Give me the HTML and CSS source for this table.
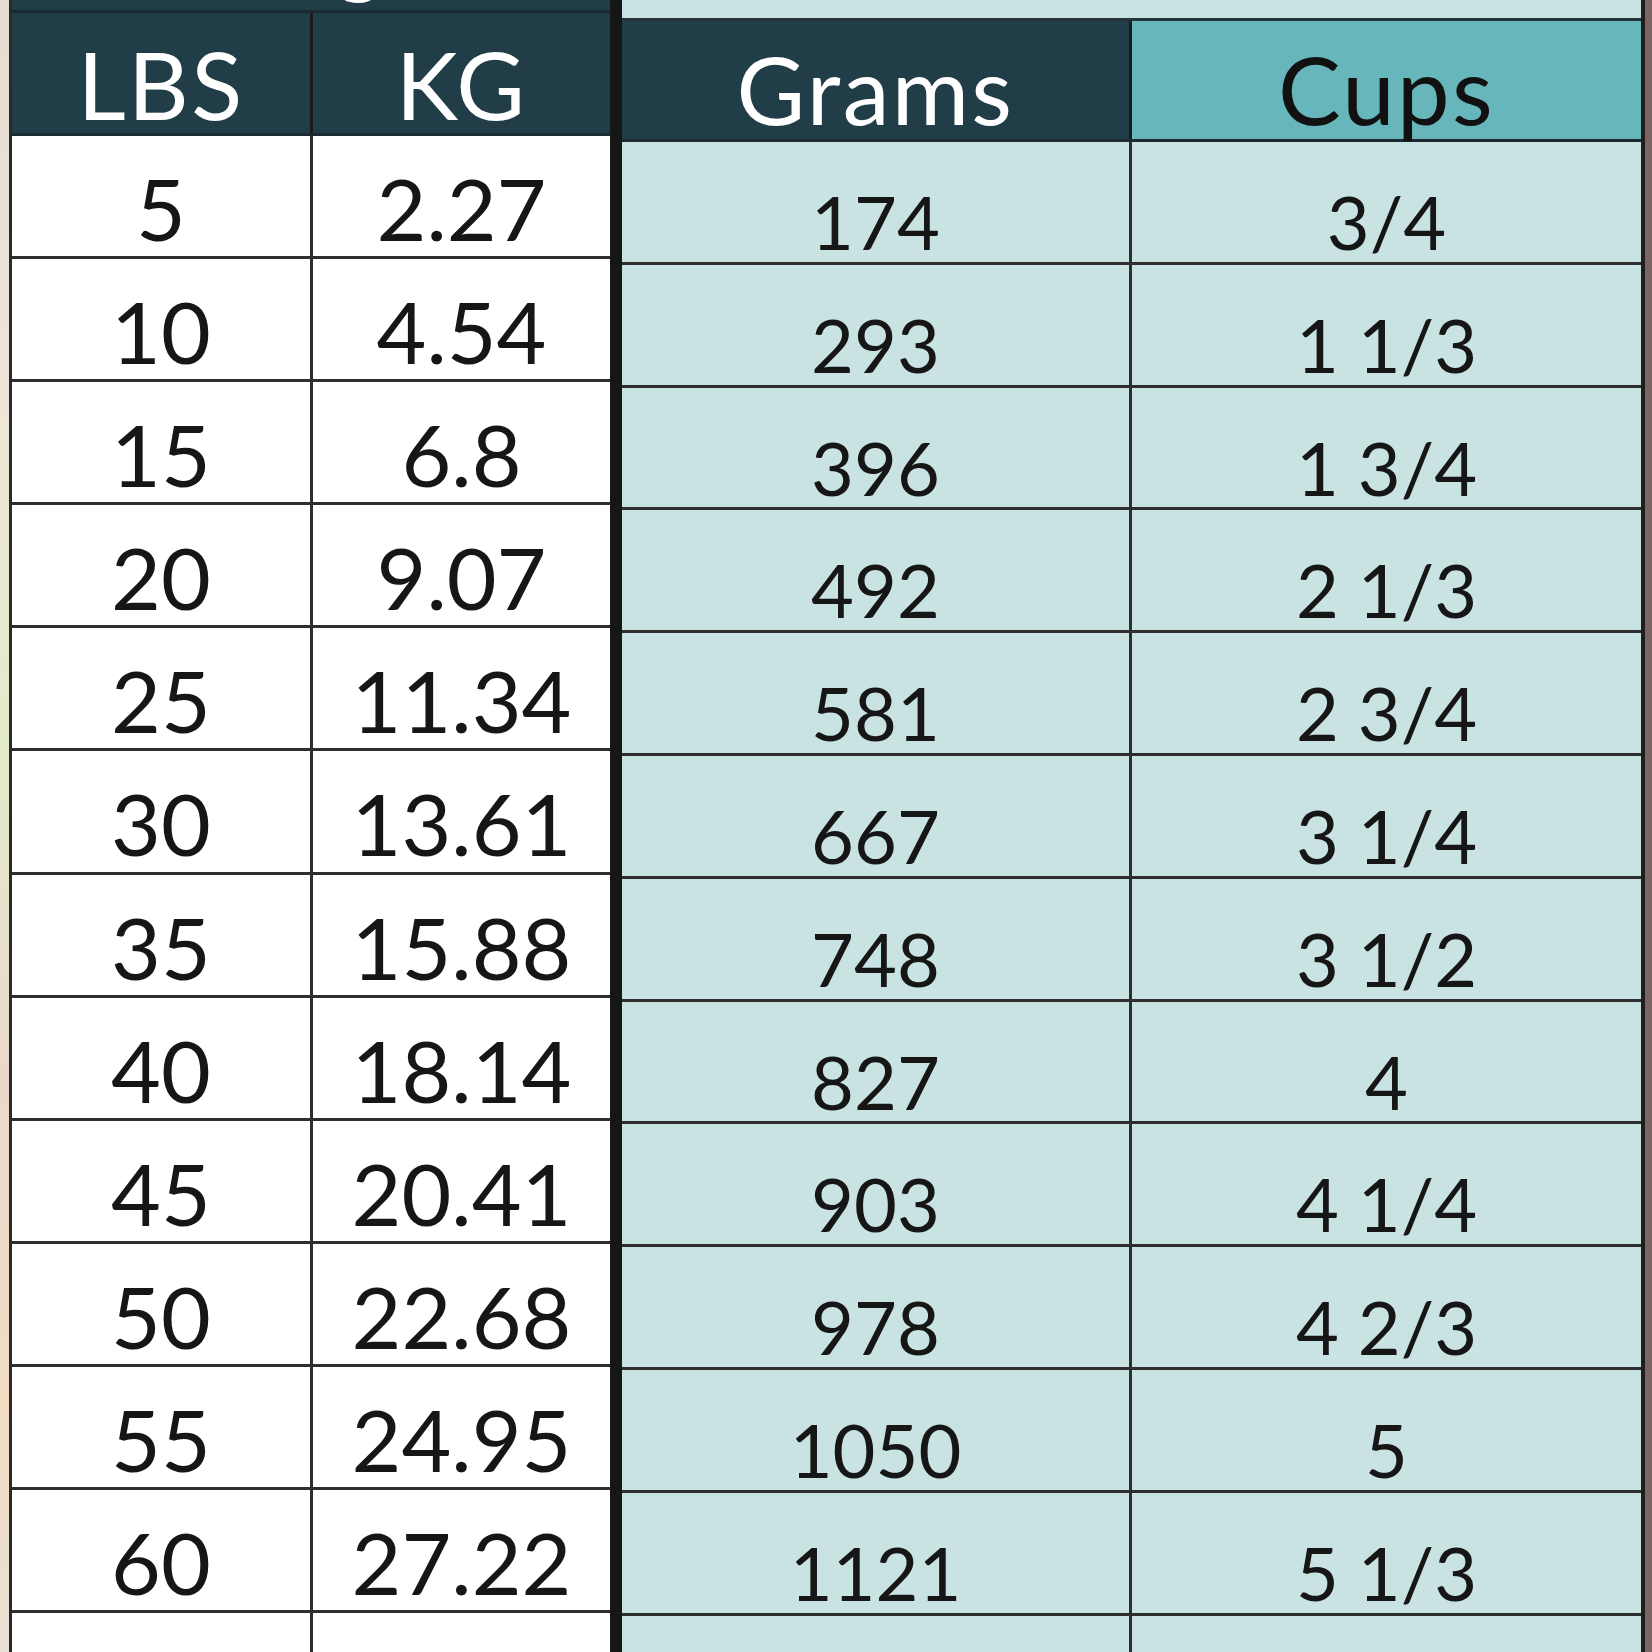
FILE: index.html
```html
<!DOCTYPE html>
<html lang="en">
<head>
<meta charset="utf-8">
<title>Dog food chart</title>
<link rel="stylesheet" href="styles.css">
</head>
<body>
<div class="page">
  <div class="edge edge-left"></div>

  <section class="table table-weight">
    <div class="title"><span>Weight</span></div>
    <div class="row head"><div class="cell">LBS</div><div class="cell">KG</div></div>
    <div class="row"><div class="cell">5</div><div class="cell">2.27</div></div>
    <div class="row"><div class="cell">10</div><div class="cell">4.54</div></div>
    <div class="row"><div class="cell">15</div><div class="cell">6.8</div></div>
    <div class="row"><div class="cell">20</div><div class="cell">9.07</div></div>
    <div class="row"><div class="cell">25</div><div class="cell">11.34</div></div>
    <div class="row"><div class="cell">30</div><div class="cell">13.61</div></div>
    <div class="row"><div class="cell">35</div><div class="cell">15.88</div></div>
    <div class="row"><div class="cell">40</div><div class="cell">18.14</div></div>
    <div class="row"><div class="cell">45</div><div class="cell">20.41</div></div>
    <div class="row"><div class="cell">50</div><div class="cell">22.68</div></div>
    <div class="row"><div class="cell">55</div><div class="cell">24.95</div></div>
    <div class="row"><div class="cell">60</div><div class="cell">27.22</div></div>
    <div class="row"><div class="cell"></div><div class="cell"></div></div>
  </section>

  <section class="table table-food">
    <div class="band"></div>
    <div class="row head"><div class="cell">Grams</div><div class="cell cups">Cups</div></div>
    <div class="row"><div class="cell">174</div><div class="cell">3/4</div></div>
    <div class="row"><div class="cell">293</div><div class="cell">1 1/3</div></div>
    <div class="row"><div class="cell">396</div><div class="cell">1 3/4</div></div>
    <div class="row"><div class="cell">492</div><div class="cell">2 1/3</div></div>
    <div class="row"><div class="cell">581</div><div class="cell">2 3/4</div></div>
    <div class="row"><div class="cell">667</div><div class="cell">3 1/4</div></div>
    <div class="row"><div class="cell">748</div><div class="cell">3 1/2</div></div>
    <div class="row"><div class="cell">827</div><div class="cell">4</div></div>
    <div class="row"><div class="cell">903</div><div class="cell">4 1/4</div></div>
    <div class="row"><div class="cell">978</div><div class="cell">4 2/3</div></div>
    <div class="row"><div class="cell">1050</div><div class="cell">5</div></div>
    <div class="row"><div class="cell">1121</div><div class="cell">5 1/3</div></div>
    <div class="row"><div class="cell"></div><div class="cell"></div></div>
  </section>

  <div class="edge edge-right"></div>
</div>
</body>
</html>
```

FILE: styles.css
```css
html, body {
  margin: 0;
  padding: 0;
  overflow: hidden;
}

body {
  background: #7a6262;
  font-family: Lato, "Open Sans", "Liberation Sans", sans-serif;
  color: #161616;
}

.page {
  display: flex;
  height: 1652px;
  overflow: hidden;
}

.edge-left {
  width: 9px;
  flex: none;
  background: linear-gradient(180deg, #e4dcd2 0%, #efe6d8 25%, #e2ebc9 45%, #ead8cc 65%, #f1dcc2 85%, #e9e0d4 100%);
}

.edge-right {
  flex: 1;
  background: #7b6464;
}

.table {
  box-sizing: border-box;
  flex: none;
  display: flex;
  flex-direction: column;
}

.table-weight {
  width: 607px;
  background: #ffffff;
  border-left: 3px solid #2a2a2a;
  border-right: 6px solid #161616;
}

.table-food {
  width: 1029px;
  background: #c8e3e2;
  border-left: 6px solid #161616;
  border-right: 4px solid #1e1e1e;
}

.title {
  box-sizing: border-box;
  height: 13px;
  flex: none;
  background: #213d48;
  border-bottom: 3px solid #1a2a30;
  overflow: hidden;
  display: flex;
  align-items: flex-end;
  justify-content: center;
}

.title span {
  font-size: 86px;
  line-height: 1.2;
  color: #ffffff;
  margin-bottom: 5px;
  margin-left: 24px;
  flex: none;
}

.band {
  box-sizing: border-box;
  height: 21px;
  flex: none;
  background: #c8e3e2;
  border-bottom: 3px solid #24353a;
}

.row {
  box-sizing: border-box;
  flex: none;
  display: grid;
  border-bottom: 3px solid #2e2e2e;
}

.table-weight .row {
  grid-template-columns: 301px 297px;
  height: 123.1px;
}

.table-food .row {
  grid-template-columns: 510px 509px;
  height: 122.8px;
}

.cell {
  box-sizing: border-box;
  text-align: center;
  white-space: nowrap;
  overflow: visible;
}

.row .cell:first-child {
  border-right: 3px solid #2e2e2e;
}

.table-weight .cell {
  font-size: 86px;
  line-height: 86px;
  padding-top: 29px;
}

.table-food .cell {
  font-size: 74px;
  line-height: 74px;
  padding-top: 43px;
}

.table-weight .row.head {
  height: 123px;
  background: #213d48;
  border-bottom-color: #1c2b31;
}

.table-food .row.head {
  height: 121px;
  background: #213d48;
  border-bottom-color: #1c2b31;
}

.row.head .cell {
  font-size: 94px;
  line-height: 94px;
  letter-spacing: 0.025em;
  color: #ffffff;
}

.table-weight .row.head .cell {
  padding-top: 24px;
}

.table-food .row.head .cell {
  padding-top: 21px;
}

.row.head .cell:first-child {
  border-right-color: #1a1a1a;
}

.row.head .cell.cups {
  background: #66b6bb;
  color: #111111;
}
```
